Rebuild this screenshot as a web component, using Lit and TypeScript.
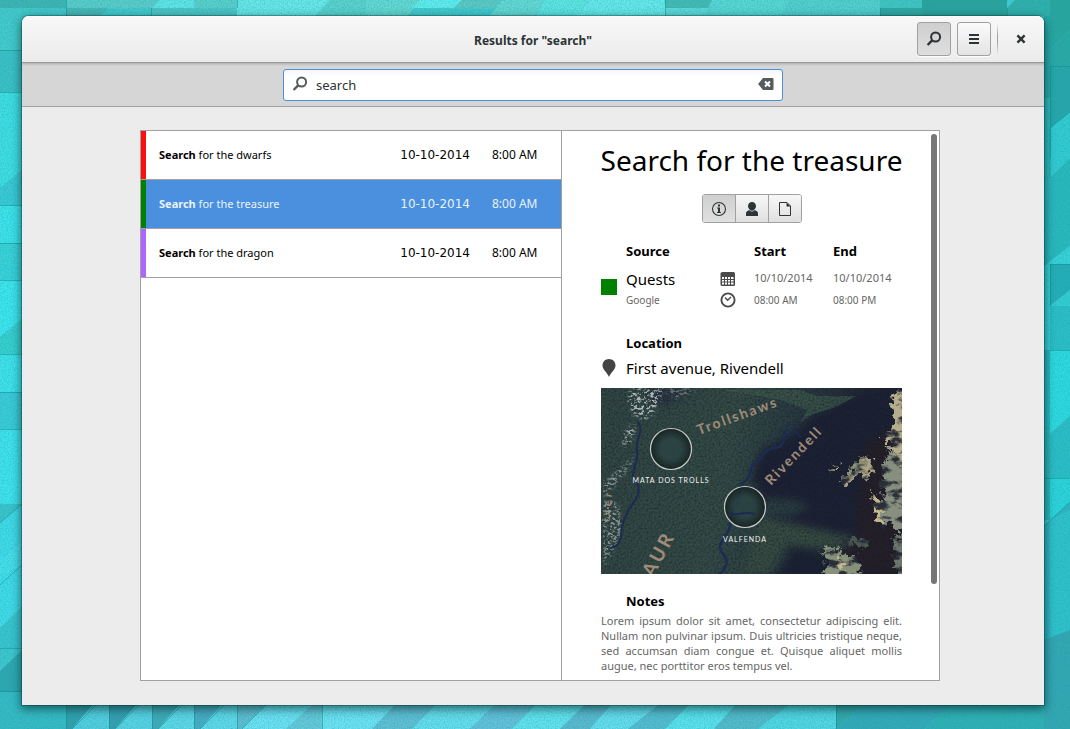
import { LitElement, html, css, svg } from "lit";
import { customElement, state } from "lit/decorators.js";
import { classMap } from "lit/directives/class-map.js";

type Shape = [string, string];

/* Flat facets of the desktop wallpaper: points, fill. */
const facets: Shape[] = [
  ["0,0 66,0 66,8 0,8", "#3fb5b3"],
  ["0,8 66,8 66,50 0,50", "#45cbcc"],
  ["74,0 160,0 152,8 66,8 66,0", "#5ccdca"],
  ["66,8 108,8 100,16 66,16", "#4bb8b6"],
  ["160,0 194,0 194,8 152,8", "#62e6e6"],
  ["151,8 237,8 237,16 151,16", "#50c8c8"],
  ["194,0 237,0 237,8 194,8", "#5cd0cc"],
  ["237,0 330,0 323,8 237,16", "#6be9e9"],
  ["237,8 323,8 315,16 237,16", "#6be9e9"],
  ["330,0 366,0 366,16 315,16", "#5cd3cd"],
  ["366,0 420,0 408,16 366,16", "#66d9d2"],
  ["420,0 462,0 454,8 412,8", "#62eeee"],
  ["462,0 502,0 494,8 454,8", "#5fc9c3"],
  ["502,0 545,0 536,16 490,16", "#66d9d4"],
  ["545,0 590,0 576,16 536,16", "#60e6e2"],
  ["590,0 665,0 665,16 576,16", "#68eaea"],
  ["665,0 712,0 704,16 665,16", "#45bab5"],
  ["665,8 712,8 712,16 665,16", "#62dcda"],
  ["712,0 790,0 780,16 704,16", "#5ad8d4"],
  ["790,0 880,0 880,16 780,16", "#55d0ce"],
  ["880,0 922,0 922,8 880,8", "#42c5c2"],
  ["880,8 922,8 922,16 880,16", "#32a8a2"],
  ["922,0 1007,0 1007,16 922,16", "#2ba39c"],
  ["1007,8 1015,0 1050,0 1050,16 1007,16", "#32b0ac"],
  ["0,50 22,50 22,92 0,92", "#3cc1c6"],
  ["0,92 22,92 22,170 0,188", "#40dfe5"],
  ["0,188 22,170 22,205 0,205", "#3acbd6"],
  ["0,205 22,205 22,243 0,243", "#3fe4ec"],
  ["0,243 22,243 22,280 0,280", "#3ad3d9"],
  ["0,280 22,280 22,319 0,337", "#3ee7ef"],
  ["0,337 22,319 22,354 0,354", "#38d0d0"],
  ["0,354 22,354 22,392 0,392", "#40e4ec"],
  ["0,392 22,392 22,429 0,429", "#3cccd9"],
  ["0,429 22,429 22,504 0,504", "#41e4ee"],
  ["0,504 22,504 0,523", "#3cc4cc"],
  ["0,523 22,504 22,545 0,561", "#42dce9"],
  ["0,561 22,543 22,578 0,578", "#48e0ec"],
  ["0,578 22,565 22,606 0,628", "#42dce9"],
  ["0,628 22,608 22,648 0,648", "#3ac5cf"],
  ["0,648 22,648 22,651 0,671", "#40c7d0"],
  ["0,671 22,650 22,692 0,692", "#2fa7b0"],
  ["0,692 66,692 66,729 0,729", "#36bbc5"],
  ["66,700 97,700 72,729 66,729", "#329fab"],
  ["97,700 109,700 109,729 72,729", "#55cfe0"],
  ["109,700 141,700 115,729 109,729", "#379eaf"],
  ["141,700 152,700 152,729 115,729", "#5bd3e5"],
  ["152,700 184,700 158,729 152,729", "#42a9b8"],
  ["184,700 194,700 194,729 158,729", "#60d8e8"],
  ["194,700 226,700 200,729 194,729", "#4aabc3"],
  ["226,700 237,700 237,729 200,729", "#62d9ea"],
  ["237,700 270,700 242,729 237,729", "#62bdd0"],
  ["270,700 318,700 286,729 242,729", "#6fe3f5"],
  ["318,700 360,700 330,729 286,729", "#69c9db"],
  ["322,705 400,700 372,729 322,729", "#70e4f5"],
  ["400,700 440,700 412,729 372,729", "#63bfd4"],
  ["440,700 500,700 470,729 412,729", "#68dfee"],
  ["500,700 540,700 512,729 470,729", "#66c1da"],
  ["540,700 590,700 560,729 512,729", "#65e4ef"],
  ["590,700 615,700 590,729 560,729", "#5eb9cf"],
  ["615,700 665,700 628,729 590,729", "#68deef"],
  ["665,700 694,700 665,729 628,729", "#57bccf"],
  ["694,700 740,700 714,729 665,729", "#5de3ee"],
  ["740,700 795,700 758,729 714,729", "#56bbcb"],
  ["795,700 836,700 836,729 758,729", "#53d8e4"],
  ["836,700 868,700 836,729", "#35a9a9"],
  ["868,700 955,700 925,729 836,729", "#35a9b7"],
  ["955,700 1070,700 1070,729 925,729", "#31b0b4"],
  ["1050,0 1070,0 1070,30 1050,50", "#2aa69f"],
  ["1050,50 1070,30 1070,66 1050,66", "#2aa9a5"],
  ["1044,16 1050,16 1050,98 1044,98", "#28aaa8"],
  ["1050,66 1070,66 1070,112 1050,128", "#28a6aa"],
  ["1044,98 1050,98 1050,216 1044,216", "#2ebcbe"],
  ["1050,128 1070,112 1070,158 1050,178", "#33ccd2"],
  ["1050,178 1070,158 1070,246 1044,266 1044,216", "#2ab9bd"],
  ["1044,266 1070,246 1070,264 1050,264 1050,350 1044,350", "#38d3d8"],
  ["1050,264 1070,264 1070,290 1050,306", "#25aeb7"],
  ["1050,306 1070,290 1070,306", "#35cfd3"],
  ["1050,306 1070,306 1070,350 1050,350", "#2cbfc7"],
  ["1050,350 1070,350 1070,416 1050,434", "#2edbe1"],
  ["1050,434 1070,416 1070,478 1050,478", "#2cbec6"],
  ["1044,350 1050,350 1050,434 1044,434", "#2bb9bf"],
  ["1044,434 1050,434 1050,520 1044,520", "#2bb5bd"],
  ["1050,478 1070,478 1070,502 1050,520", "#2cd5da"],
  ["1044,526 1070,502 1070,612 1050,650 1044,700", "#31b5c3"],
  ["1050,520 1070,510 1070,630 1050,646", "#30c2cb"],
  ["1044,640 1070,630 1070,729 1044,729", "#34a7b3"],
];

/* Creases between facets. */
const creases =
  "M0 50.5H22M0 92.5H22M0 205.5H22M0 243.5H22M0 280.5H22M0 354.5H22M0 392.5H22M0 429.5H22M0 523L22 504M0 648.5H22M0 691.5H22M0 585L22 565" +
  "M66.5 0V16M151.5 8V16M237.5 0V8M665.5 0V16M880.5 8V16M1007.5 8V16M1050.5 66V158M1050 66.5H1070M1050 178V128L1070 112M1050.5 264V306M1050 264.5H1070M1050 350.5H1070M1044 478.5H1070M1044 526L1070 502" +
  "M66.5 705V729M109.5 705V729M152.5 705V729M194.5 705V729M237.5 705V729M322.5 705V729M836.5 705V729M72 729L97 704M115 729L140 704M158 729L183 704M200 729L225 704M242 729L267 704";

const wallpaper = svg`
  <svg class="wallpaper" viewBox="0 0 1070 729" preserveAspectRatio="none" aria-hidden="true">
    <defs>
      <filter id="grain" x="0" y="0" width="100%" height="100%" color-interpolation-filters="sRGB">
        <feTurbulence type="fractalNoise" baseFrequency="0.7" numOctaves="2" seed="4"></feTurbulence>
        <feColorMatrix values="0 0 0 0 .1  0 0 0 0 .6  0 0 0 0 .65  .6 .4 0 0 -.38"></feColorMatrix>
      </filter>
    </defs>
    <rect width="1070" height="729" fill="#45cdd0"></rect>
    ${facets.map(([points, fill]) => svg`<polygon points=${points} fill=${fill}></polygon>`)}
    <path d=${creases} fill="none" stroke="#0f8f90" stroke-opacity=".55"></path>
    <rect width="1070" height="729" filter="url(#grain)"></rect>
  </svg>`;

const lens = svg`
  <svg class="icon" viewBox="0 0 16 16" aria-hidden="true">
    <circle cx="9.6" cy="6" r="4.5" fill="none" stroke="currentColor" stroke-width="2"></circle>
    <path d="M6.4 9.2L1.6 14" stroke="currentColor" stroke-width="2.4"></path>
  </svg>`;

const iconMenu = svg`
  <svg class="icon" viewBox="0 0 16 16" aria-hidden="true">
    <path d="M3 3h10v2H3zM3 7h10v2H3zM3 11h10v2H3z" fill="currentColor"></path>
  </svg>`;

const iconClose = svg`
  <svg class="icon" viewBox="0 0 16 16" aria-hidden="true">
    <path d="M4.4 4.4l7.2 7.2M11.6 4.4l-7.2 7.2" stroke="currentColor" stroke-width="2.4"></path>
  </svg>`;

const iconClear = svg`
  <svg class="icon" viewBox="0 0 16 16" aria-hidden="true">
    <path d="M5 2h9.500q1 0 1 1v10q0 1-1 1H5L.5 8.600v-1.200z" fill="currentColor"></path>
    <path d="M7 5.500l5 5M12 5.500l-5 5" stroke="#fff" stroke-width="2"></path>
  </svg>`;

const iconInfo = svg`
  <svg class="icon" viewBox="0 0 16 16" aria-hidden="true">
    <circle cx="8" cy="8" r="6.500" fill="none" stroke="currentColor" stroke-width="1.100"></circle>
    <path d="M7 3.600h2v2H7zM6 6.600h3v4.400h1v1H6v-1h1V7.600H6z" fill="currentColor"></path>
  </svg>`;

const iconPerson = svg`
  <svg class="icon" viewBox="0 0 16 16" aria-hidden="true">
    <path d="M8 1c2.400 0 4 1.700 4 4 0 1.700-1 3.300-2 4 2.600.6 4 1.600 4 3.400V15H2v-2.600C2 10.600 3.400 9.600 6 9 5 8.300 4 6.700 4 5c0-2.300 1.600-4 4-4z" fill="currentColor"></path>
    <path d="M5.600 9.200L8 10.400l2.400-1.200" stroke="#eee" stroke-width=".7" fill="none"></path>
  </svg>`;

const iconPage = svg`
  <svg class="icon" viewBox="0 0 16 16" aria-hidden="true">
    <path d="M2.500 1.500h7.500l3.500 3.500v9.500h-11z" fill="none" stroke="currentColor"></path>
    <path d="M9.500 1.500v4h4z" fill="currentColor"></path>
  </svg>`;

const iconCalendar = svg`
  <svg class="icon" viewBox="0 0 16 16" aria-hidden="true">
    <path d="M2.500 1h11Q15 1 15 2.500v11q0 1.500-1.500 1.500h-11Q.5 15 .5 13.500v-11Q.5 1 2.500 1z" fill="currentColor"></path>
    <path d="M2 6h2v2H2zM5 6h2v2H5zM8 6h2v2H8zM11 6h2.500v2H11zM2 9h2v1.500H2zM5 9h2v1.500H5zM8 9h2v1.500H8zM11 9h2.500v1.500H11zM2 11.500h2v2H2zM5 11.500h2v2H5zM8 11.500h2v2H8zM11 11.500h2.500v2H11z" fill="#fff"></path>
  </svg>`;

const iconClock = svg`
  <svg class="icon" viewBox="0 0 16 16" aria-hidden="true">
    <circle cx="8" cy="8" r="6.600" fill="none" stroke="currentColor" stroke-width="1.900"></circle>
    <path d="M5 5.500L7.600 8.200 11 5" fill="none" stroke="currentColor" stroke-width="1.400"></path>
  </svg>`;

const iconPin = svg`
  <svg class="pin" viewBox="0 0 14 18" aria-hidden="true">
    <path d="M7 0c3.700 0 6.500 2.800 6.500 6.400C13.500 10.500 9 13 7 18 5 13 .5 10.500.5 6.400.5 2.800 3.300 0 7 0z" fill="currentColor"></path>
  </svg>`;

const map = svg`
  <svg class="map" viewBox="0 0 301 186" role="img" aria-label="Map of Rivendell">
    <defs>
      <linearGradient id="land" x1="0" y1="0" x2="1" y2=".1">
        <stop offset="0" stop-color="#324644"></stop>
        <stop offset=".45" stop-color="#344c47"></stop>
        <stop offset=".68" stop-color="#293842"></stop>
        <stop offset="1" stop-color="#1d1e2e"></stop>
      </linearGradient>
      <radialGradient id="lensfill">
        <stop offset=".5" stop-color="#2a4443"></stop>
        <stop offset="1" stop-color="#121d1c"></stop>
      </radialGradient>
      <filter id="soft" x="-20%" y="-20%" width="140%" height="140%" color-interpolation-filters="sRGB">
        <feGaussianBlur stdDeviation="4"></feGaussianBlur>
      </filter>
      <filter id="rough" x="-10%" y="-10%" width="120%" height="120%" color-interpolation-filters="sRGB">
        <feTurbulence type="fractalNoise" baseFrequency=".16" numOctaves="4" seed="8" result="n"></feTurbulence>
        <feDisplacementMap in="SourceGraphic" in2="n" scale="18" xChannelSelector="R" yChannelSelector="G" result="d"></feDisplacementMap>
        <feTurbulence type="fractalNoise" baseFrequency=".08 .14" numOctaves="4" seed="21" result="m"></feTurbulence>
        <feColorMatrix in="m" values="0 0 0 0 .16  0 0 0 0 .18  0 0 0 0 .22  5 0 0 0 -2.400" result="shade"></feColorMatrix>
        <feComposite in="shade" in2="d" operator="atop"></feComposite>
      </filter>
      <filter id="terrain" x="0" y="0" width="100%" height="100%" color-interpolation-filters="sRGB">
        <feTurbulence type="fractalNoise" baseFrequency=".5" numOctaves="3" seed="2"></feTurbulence>
        <feColorMatrix values="0 0 0 0 .06  0 0 0 0 .1  0 0 0 0 .12  .9 .6 0 0 -.6"></feColorMatrix>
      </filter>
      <filter id="snow" x="0" y="0" width="100%" height="100%" color-interpolation-filters="sRGB">
        <feTurbulence type="fractalNoise" baseFrequency=".3 .4" numOctaves="3" seed="11" result="n"></feTurbulence>
        <feColorMatrix in="n" values="0 0 0 0 .68  0 0 0 0 .72  0 0 0 0 .72  6 0 0 0 -2.900" result="s"></feColorMatrix>
        <feGaussianBlur in="SourceGraphic" stdDeviation="2" result="b"></feGaussianBlur>
        <feComposite in="s" in2="b" operator="in"></feComposite>
      </filter>
    </defs>
    <rect width="301" height="186" fill="url(#land)"></rect>
    <g filter="url(#soft)">
      <path d="M256 6L205 32 192 46 160 62 150 92 160 108 150 125 190 140 232 148 301 186V0z" fill="#1c2135"></path>
      <path d="M180 150L228 158 245 190H172L190 168z" fill="#1b2133"></path>
      <path d="M160 128L220 142 262 152 230 162 185 158 168 186H140z" fill="#384c43"></path>
      <path d="M262 60L285 40 301 60V186H230L255 150z" fill="#251f2a"></path>
      <path d="M160 110l30 2 20 6-20 10-32 0z" fill="#2b3e43"></path>
      <path d="M40 0H100L60 20z" fill="#2a3442"></path>
    </g>
    <path d="M120 2L200 2 216 8 256 8 232 20 212 26 200 34 206 22 180 12z" fill="#3f5b4c" opacity=".7"></path>
    <rect width="301" height="186" filter="url(#terrain)"></rect>
    <g filter="url(#rough)">
      <path d="M296 0L312 0V92L288 74 290 56 282 50 294 34 290 18z" fill="#b5ad8b"></path>
      <path d="M286 62L312 88V150L288 136 274 126 282 110 280 92z" fill="#87907f"></path>
      <path d="M270 100L276 132 284 142 278 112z" fill="#c3b88f"></path>
      <path d="M236 96L248 86 262 82 256 68 272 72 270 90 258 86 246 98z" fill="#aca384"></path>
      <path d="M230 74l4 6 4-2-4 6z" fill="#c0b68f"></path>
      <path d="M240 92L252 78 266 66 262 84z" fill="#8b8c74"></path>
      <path d="M222 158L236 162 256 172 262 192H226z" fill="#87917a"></path>
      <path d="M232 164L244 172 240 184z" fill="#c4bb94"></path>
      <path d="M240 150L268 152 262 162 248 158z" fill="#4a5652"></path>
      <path d="M292 150L312 146V196H296z" fill="#6d766a"></path>
    </g>
    <g fill="#fff">
      <path d="M30 0H62L56 20 46 32 34 28 26 16z" filter="url(#snow)"></path>
      <path d="M60 0H100L76 12z" filter="url(#snow)" opacity=".5"></path>
      <path d="M36 34L30 54 20 60 26 40z" filter="url(#snow)"></path>
      <path d="M36 66L24 84 14 96 2 110 2 96 22 78z" filter="url(#snow)" opacity=".8"></path>
      <path d="M2 112H16L22 140 14 158 2 180z" filter="url(#snow)" opacity=".7"></path>
    </g>
    <g fill="none" stroke="#1b2b52" stroke-linecap="round">
      <path d="M37 34C44 44 34 50 36 62 38 72 30 84 32 90 40 96 38 104 36 110 26 122 20 136 20 150 18 158 14 158 10 160" stroke-width="2"></path>
      <path d="M183 44C184 54 182 60 172 60 162 62 160 74 152 76 148 88 148 92 140 96 138 104 140 110 134 120 128 124 132 128 128 142 124 150 114 158 122 166 130 174 124 182 116 188" stroke-width="2.500"></path>
      <path d="M184 46C184 34 196 34 195 44L184 46M195 44L200 49" stroke-width="1.200"></path>
    </g>
    <g fill="url(#lensfill)" fill-opacity=".8" stroke="#c9cbc7" stroke-width="1.200">
      <circle cx="70" cy="61" r="20.500"></circle>
      <circle cx="144" cy="119" r="20.500"></circle>
    </g>
    <path d="M128 124c8 6 12-2 26 2" fill="none" stroke="#1b2b52" stroke-width="2"></path>
    <g class="region">
      <text x="98" y="47" transform="rotate(-20 98 47)">Trollshaws</text>
      <text x="170" y="98" transform="rotate(-46 170 98)">Rivendell</text>
      <text class="realm" x="52" y="190" transform="rotate(-62 52 190)">AUR</text>
      <text class="river" x="8" y="134" transform="rotate(-84 8 134)">iver</text>
    </g>
    <g class="place">
      <text x="70" y="95">MATA DOS TROLLS</text>
      <text x="144" y="154">VALFENDA</text>
    </g>
  </svg>`;

interface Hit {
  match: string;
  rest: string;
  date: string;
  time: string;
  calendar: string;
}

@customElement("app-root")
export class AppRoot extends LitElement {
  @state() private selected = 1;
  @state() private tab = 0;
  @state() private query = "search";

  private hits: Hit[] = [
    { match: "Search", rest: " for the dwarfs", date: "10-10-2014", time: "8:00 AM", calendar: "red" },
    { match: "Search", rest: " for the treasure", date: "10-10-2014", time: "8:00 AM", calendar: "green" },
    { match: "Search", rest: " for the dragon", date: "10-10-2014", time: "8:00 AM", calendar: "violet" },
  ];

  private tabs = [
    { name: "Details", icon: iconInfo },
    { name: "People", icon: iconPerson },
    { name: "Document", icon: iconPage },
  ];

  static styles = css`
    :host {
      position: relative;
      box-sizing: border-box;
      min-height: 100vh;
      padding: 16px 26px 24px 22px;
      display: flex;
      font-family: "Noto Sans", "Open Sans", sans-serif;
      color: #000;
    }
    * { box-sizing: border-box; }
    h1, h2, h3, p, ul { margin: 0; padding: 0; }
    button, input { font: inherit; color: inherit; }
    button { padding: 0; border: 0; background: none; display: flex; align-items: center; justify-content: center; }
    .icon { width: 16px; height: 16px; display: block; }

    .wallpaper { position: absolute; inset: 0; width: 100%; height: 100%; }

    .window {
      position: relative;
      flex: 1;
      min-width: 0;
      display: flex;
      flex-direction: column;
      background: #ececec;
      border-radius: 7px 7px 0 0;
      box-shadow: 0 0 0 1px rgba(0, 40, 40, 0.3), 0 3px 10px 1px rgba(0, 30, 30, 0.6);
    }

    .titlebar {
      display: grid;
      grid-template-columns: 1fr auto 1fr;
      align-items: center;
      height: 47px;
      padding: 0 8px;
      border-bottom: 1px solid #9a9a9a;
      border-radius: 7px 7px 0 0;
      background: linear-gradient(#f8f8f8, #ebebeb);
      box-shadow: inset 0 1px #fff;
      color: #2e3436;
    }
    .titlebar h1 { grid-column: 2; padding-top: 4px; font-size: 12px; line-height: 20px; font-weight: 700; }
    .controls { justify-self: end; display: flex; align-items: center; gap: 6px; }
    .tool {
      width: 34px;
      height: 34px;
      border: 1px solid #a1a1a1;
      border-radius: 3px;
      background: linear-gradient(#fbfbfb, #e4e4e4);
      box-shadow: 0 1px #fff;
    }
    .tool.pressed { background: linear-gradient(#cfcfcf, #dedede); }
    .rule {
      width: 1px;
      height: 32px;
      margin-right: 2px;
      background: linear-gradient(transparent, #a0a0a0 40%, #a0a0a0 60%, transparent);
    }
    .close { width: 30px; height: 30px; }

    .searchbar {
      display: flex;
      justify-content: center;
      padding: 6px 16px 5px;
      height: 44px;
      background: #d6d6d6;
      border-bottom: 1px solid #a1a1a1;
      box-shadow: inset 0 3px 3px -2px rgba(0, 0, 0, 0.2);
    }
    .entry {
      display: flex;
      align-items: center;
      gap: 8px;
      width: 500px;
      height: 32px;
      padding: 0 8px 2px;
      border: 1px solid #4a90d9;
      border-radius: 3px;
      background: linear-gradient(#f3f6f9, #fff 6px);
      color: #555a5c;
    }
    .entry input {
      flex: 1;
      min-width: 0;
      border: 0;
      padding: 2px 0 0;
      outline: 0;
      background: none;
      font-size: 13px;
      line-height: 20px;
      color: #2e3436;
    }

    .content { flex: 1; display: flex; padding: 23px 104px 24px 118px; }
    .panes {
      flex: 1;
      display: grid;
      grid-template-columns: minmax(0, 421fr) minmax(0, 377fr);
      border: 1px solid #a1a1a1;
      background: #fff;
    }

    .results { list-style: none; border-right: 1px solid #a1a1a1; }
    .results li { border-bottom: 1px solid #a1a1a1; }
    .hit {
      width: 100%;
      height: 48px;
      padding: 0 22px 1px 13px;
      border-left: 5px solid transparent;
      justify-content: flex-start;
      font-size: 12px;
      text-align: left;
    }
    .red .hit { border-left-color: #fb0f0f; }
    .green .hit { border-left-color: #008000; }
    .violet .hit { border-left-color: #ad66ff; }
    .hit.selected { background-color: #4a90df; color: #e9f2fb; }
    .name { flex: 1; font-size: 11px; }
    .when { font-family: "DejaVu Sans", sans-serif; }
    .at { min-width: 47px; margin-left: 22px; }

    .detail { position: relative; padding: 10px 37px 6px 39px; display: flex; flex-direction: column; }
    .thumb {
      position: absolute;
      top: 3px;
      right: 2px;
      width: 6px;
      height: 82%;
      border-radius: 3px;
      background: #777;
    }
    .detail h2 { font-size: 28px; line-height: 38px; font-weight: 400; white-space: nowrap; align-self: center; }
    .tabs {
      align-self: center;
      display: flex;
      margin-top: 15px;
      border: 1px solid #a1a1a1;
      border-radius: 3px;
      overflow: hidden;
      color: #2e3436;
    }
    .tab { width: 32px; height: 27px; background: linear-gradient(#f7f7f7, #dfdfdf); }
    .tab + .tab { width: 33px; border-left: 1px solid #a1a1a1; }
    .tab.on { background: linear-gradient(#cfcfcf, #e0e0e0); }

    h3 { font-size: 13px; line-height: 20px; font-weight: 700; color: #000; }
    .facts {
      display: grid;
      grid-template-columns: 25px 94px 34px 79px 1fr;
      grid-template-rows: 20px 8px 20px 22px;
      align-items: center;
      margin-top: 18px;
      color: #666;
      font-size: 10px;
      line-height: 16px;
    }
    .head-source { grid-area: 1 / 2; }
    .head-start { grid-area: 1 / 4; }
    .head-end { grid-area: 1 / 5; }
    .swatch { grid-area: 3 / 1 / 5 / 2; width: 16px; height: 16px; margin-bottom: 6px; background: #008000; }
    .source { grid-area: 3 / 2; font-size: 15px; color: #000; }
    .provider { grid-area: 4 / 2; }
    .glyph { grid-area: 3 / 3; color: #4a4a4a; }
    .glyph.low { grid-row: 4; }
    .day { grid-row: 3; padding-bottom: 3px; font-size: 11px; }
    .hour { grid-row: 4; }
    .start { grid-column: 4; }
    .end { grid-column: 5; }

    .indent { margin-left: 25px; }
    .location { margin-top: 22px; }
    .address { display: flex; align-items: center; gap: 9px; height: 30px; font-size: 15px; line-height: 20px; }
    .pin { width: 16px; height: 18px; color: #444; }
    .map { display: block; width: 100%; height: auto; margin-top: 5px; overflow: hidden; }
    .region { font-family: Lato, sans-serif; font-weight: 700; font-size: 14px; letter-spacing: 2px; fill: #a08b78; }
    .realm { font-size: 19px; letter-spacing: 3px; }
    .river { font-size: 10px; letter-spacing: 4px; }
    .place { font-family: Lato, sans-serif; font-size: 7px; fill: #f2f2f2; text-anchor: middle; letter-spacing: 1px; }
    .notes { margin-top: 17px; }
    .body { margin-top: 2px; color: #666; font-size: 11px; line-height: 15px; text-align: justify; }
  `;

  render() {
    return html`
      ${wallpaper}
      <main class="window">
        <header class="titlebar">
          <h1>Results for "${this.query}"</h1>
          <div class="controls">
            <button class="tool pressed" aria-label="Search" aria-pressed="true">${lens}</button>
            <button class="tool" aria-label="Menu">${iconMenu}</button>
            <span class="rule"></span>
            <button class="close" aria-label="Close">${iconClose}</button>
          </div>
        </header>
        <div class="searchbar">
          <div class="entry">
            ${lens}
            <input
              type="text"
              aria-label="Search events"
              .value=${this.query}
              @input=${(e: Event) => (this.query = (e.target as HTMLInputElement).value)}
            />
            <button aria-label="Clear" @click=${() => (this.query = "")}>${iconClear}</button>
          </div>
        </div>
        <div class="content">
          <div class="panes">
            <ul class="results">
              ${this.hits.map(
                (hit, i) => html`
                  <li class=${hit.calendar}>
                    <button
                      class=${classMap({ hit: true, selected: i === this.selected })}
                      @click=${() => (this.selected = i)}
                    >
                      <span class="name"><b>${hit.match}</b>${hit.rest}</span>
                      <span class="when">${hit.date}</span>
                      <span class="at">${hit.time}</span>
                    </button>
                  </li>
                `
              )}
            </ul>
            <section class="detail">
              <h2>Search for the treasure</h2>
              <div class="tabs">
                ${this.tabs.map(
                  (tab, i) => html`
                    <button
                      class=${classMap({ tab: true, on: i === this.tab })}
                      aria-label=${tab.name}
                      aria-pressed=${i === this.tab}
                      @click=${() => (this.tab = i)}
                    >${tab.icon}</button>
                  `
                )}
              </div>
              <div class="facts">
                <h3 class="head-source">Source</h3>
                <h3 class="head-start">Start</h3>
                <h3 class="head-end">End</h3>
                <span class="swatch"></span>
                <span class="source">Quests</span>
                <span class="provider">Google</span>
                <span class="glyph">${iconCalendar}</span>
                <span class="glyph low">${iconClock}</span>
                <span class="day start">10/10/2014</span>
                <span class="day end">10/10/2014</span>
                <span class="hour start">08:00 AM</span>
                <span class="hour end">08:00 PM</span>
              </div>
              <h3 class="indent location">Location</h3>
              <p class="address">${iconPin}<span>First avenue, Rivendell</span></p>
              ${map}
              <h3 class="indent notes">Notes</h3>
              <p class="body">
                Lorem ipsum dolor sit amet, consectetur adipiscing elit. Nullam non pulvinar ipsum. Duis
                ultricies tristique neque, sed accumsan diam congue et. Quisque aliquet mollis augue, nec
                porttitor eros tempus vel.
              </p>
              <div class="thumb"></div>
            </section>
          </div>
        </div>
      </main>
    `;
  }
}
